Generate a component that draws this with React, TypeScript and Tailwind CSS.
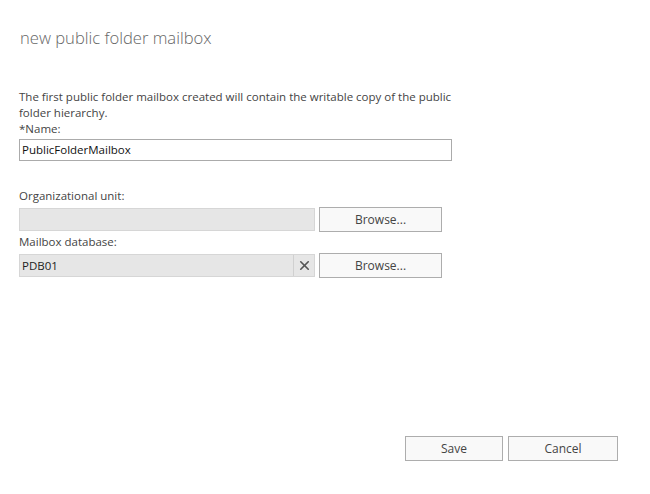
import { X } from 'lucide-react';

type BrowseRowProps = {
  value?: string,
  clearable?: boolean,
}

function BrowseButton() {
  return (
    <button
      type="button"
      className="ml-[4px] h-[25px] w-[123px] border border-[#adadad] bg-[#f9f9f9] text-[12px] text-[#444]"
    >
      Browse...
    </button>
  );
}

function BrowseRow({ value = '', clearable = false }: BrowseRowProps) {
  return (
    <div className="flex items-center">
      <div className="flex h-[23px] w-[296px] items-center border border-[#d6d6d6] bg-[#e6e6e6]">
        <span className="flex-1 pl-[2px] text-[11.5px] text-[#222]">{value}</span>
        {clearable && (
          <span className="flex h-full w-[21px] items-center justify-center border-l border-[#d0d0d0] text-[#555]">
            <X size={15} strokeWidth={2.6} />
          </span>
        )}
      </div>
      <BrowseButton />
    </div>
  );
}

function App() {
  return (
    <div
      className="flex h-[494px] w-[650px] flex-col bg-white"
      style={{ fontFamily: '"Open Sans", "Noto Sans", sans-serif' }}
    >
      <h1 className="pl-[20px] pt-[26px] text-[16.6px] font-light leading-[24px] text-[#666]">
        new public folder mailbox
      </h1>

      <div className="mt-[39px] pl-[19px] text-[11.5px] leading-[16px] text-[#444]">
        <p className="w-[440px]">
          The first public folder mailbox created will contain the writable copy of the public folder hierarchy.
        </p>
        <p>*Name:</p>
        <div className="mt-[2px] flex h-[22px] w-[433px] items-center border border-[#ababab] pl-[2px] text-[#111]">
          PublicFolderMailbox
        </div>

        <p className="mt-[27px]">Organizational unit:</p>
        <div className="mt-[3px]">
          <BrowseRow />
        </div>
        <p className="mt-[2px]">Mailbox database:</p>
        <div className="mt-[3px]">
          <BrowseRow value="PDB01" clearable />
        </div>
      </div>

      <div className="mt-auto flex justify-end gap-[5px] pb-[33px] pr-[32px]">
        <button type="button" className="h-[25px] w-[98px] border border-[#adadad] bg-[#f9f9f9] text-[12px] text-[#444]">
          Save
        </button>
        <button type="button" className="h-[25px] w-[110px] border border-[#adadad] bg-[#f9f9f9] text-[12px] text-[#444]">
          Cancel
        </button>
      </div>
    </div>
  );
}

export default App;
